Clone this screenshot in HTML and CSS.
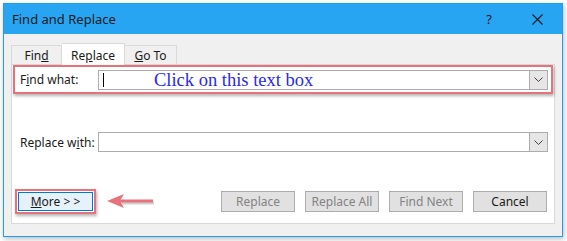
FILE: index.html
```html
<!DOCTYPE html>
<html lang="en">

<head>
    <meta charset="UTF-8">
    <title>Find and Replace</title>
    <link rel="stylesheet" href="styles.css">
</head>

<body>
    <div class="window">
        <div class="titlebar">
            <span class="title">Find and Replace</span>
            <span class="help">?</span>
            <svg class="close" width="11" height="11" viewBox="0 0 11 11">
                <path d="M0.5 0.5 L10.5 10.5 M10.5 0.5 L0.5 10.5" stroke="#1a1a1a" stroke-width="1.1" fill="none" />
            </svg>
        </div>

        <div class="content">
            <div class="tabs">
                <div class="tab find">Fin<u>d</u></div>
                <div class="tab active">Re<u>p</u>lace</div>
                <div class="tab goto"><u>G</u>o To</div>
            </div>

            <div class="panel">
                <div class="row highlight">
                    <label class="label">F<u>i</u>nd what:</label>
                    <div class="combo">
                        <div class="field">
                            <span class="caret"></span>
                            <span class="hint">Click on this text box</span>
                        </div>
                        <div class="drop">
                            <svg width="9" height="5" viewBox="0 0 9 5">
                                <path d="M0.5 0.5 L4.5 4.5 L8.5 0.5" stroke="#444" fill="none" />
                            </svg>
                        </div>
                    </div>
                </div>

                <div class="row second">
                    <label class="label">Replace w<u>i</u>th:</label>
                    <div class="combo">
                        <div class="field"></div>
                        <div class="drop">
                            <svg width="9" height="5" viewBox="0 0 9 5">
                                <path d="M0.5 0.5 L4.5 4.5 L8.5 0.5" stroke="#444" fill="none" />
                            </svg>
                        </div>
                    </div>
                </div>

                <div class="buttons">
                    <div class="more-wrap">
                        <button class="btn more"><u>M</u>ore &gt; &gt;</button>
                    </div>
                    <svg class="arrow" width="52" height="18" viewBox="0 0 52 18">
                        <path d="M48 10 L16 10" stroke="rgba(0,0,0,0.18)" stroke-width="3" />
                        <path d="M47 8 L14 8" stroke="#e8727c" stroke-width="3" />
                        <path d="M1 8 L18 1 L14 8 L18 15 Z" fill="#e8727c" />
                    </svg>
                    <span class="spacer"></span>
                    <button class="btn off">Replace</button>
                    <button class="btn off">Replace All</button>
                    <button class="btn off">Find Next</button>
                    <button class="btn">Cancel</button>
                </div>
            </div>
        </div>
    </div>
</body>

</html>
```

FILE: styles.css
```css
body {
    margin: 0;
    width: 567px;
    height: 241px;
    background: #fdfdfd;
    font-family: "Noto Sans", "Open Sans", sans-serif;
    font-size: 12px;
    color: #1a1a1a;
}

.window {
    margin: 3px 0 0 3px;
    width: 558px;
    height: 232px;
    border: 1px solid #1e9ef0;
    background: #f0f0f0;
    box-shadow: 1px 2px 5px rgba(0, 0, 0, 0.25);
    display: flex;
    flex-direction: column;
}

.titlebar {
    height: 30px;
    background: #27a5f2;
    display: flex;
    align-items: center;
    padding: 0 0 0 8px;
}

.title {
    font-size: 13px;
    flex: 1;
    padding-bottom: 1px;
}

.help {
    font-size: 13px;
    margin-right: 40px;
}

.close {
    margin-right: 19px;
}

.content {
    padding: 8px 7px 0 7px;
}

.tabs {
    display: flex;
    align-items: flex-end;
    height: 22px;
}

.tab {
    height: 19px;
    border: 1px solid #d9d9d9;
    border-bottom: none;
    background: #f0f0f0;
    line-height: 20px;
    text-align: center;
    box-sizing: border-box;
}

.find {
    width: 51px;
}

.goto {
    width: 52px;
    border-left: none;
}

.tab.active {
    width: 63px;
    height: 22px;
    background: #fff;
    border-left: none;
    margin-bottom: -1px;
    line-height: 24px;
}

.panel {
    height: 160px;
    border: 1px solid #d9d9d9;
    background: #fff;
    box-sizing: border-box;
    display: flex;
    flex-direction: column;
}

.row {
    display: flex;
    align-items: center;
    padding: 0 5px 0 8px;
}

.highlight {
    margin: 0 1px;
    height: 29px;
    border: 2px solid #e8727c;
    box-sizing: border-box;
    padding: 0 3px 0 5px;
    box-shadow: 1px 2px 3px rgba(0, 0, 0, 0.3);
}

.second {
    margin-top: 38px;
}

.label {
    width: 78px;
}

.combo {
    display: flex;
    width: 450px;
    height: 20px;
    border: 1px solid #acacac;
    box-sizing: border-box;
}

.field {
    flex: 1;
    display: flex;
    align-items: center;
    background: #fff;
}

.caret {
    width: 1px;
    height: 14px;
    background: #000;
    margin-left: 4px;
}

.hint {
    margin-left: 50px;
    font-family: "Liberation Serif", serif;
    font-size: 18.5px;
    color: #2a2ae8;
    line-height: 18px;
}

.drop {
    width: 17px;
    border-left: 1px solid #acacac;
    background: #e6e6e6;
    display: flex;
    align-items: center;
    justify-content: center;
}

.buttons {
    margin-top: auto;
    margin-bottom: 9px;
    display: flex;
    align-items: center;
    padding: 0 7px 0 3px;
}

.more-wrap {
    border: 2px solid #e8727c;
    padding: 1px;
    box-shadow: 1px 2px 3px rgba(0, 0, 0, 0.3);
}

.btn {
    width: 74px;
    height: 21px;
    border: 1px solid #adadad;
    background: #e1e1e1;
    font-family: inherit;
    font-size: 12px;
    color: #1a1a1a;
    padding: 0;
    margin-left: 10px;
}

.more-wrap .btn {
    margin: 0;
    width: 75px;
    height: 19px;
    background: #e5f1fb;
    border-color: #0078d7;
}

.btn.off {
    color: #838383;
}

.arrow {
    margin-left: 10px;
}

.spacer {
    flex: 1;
}
```
